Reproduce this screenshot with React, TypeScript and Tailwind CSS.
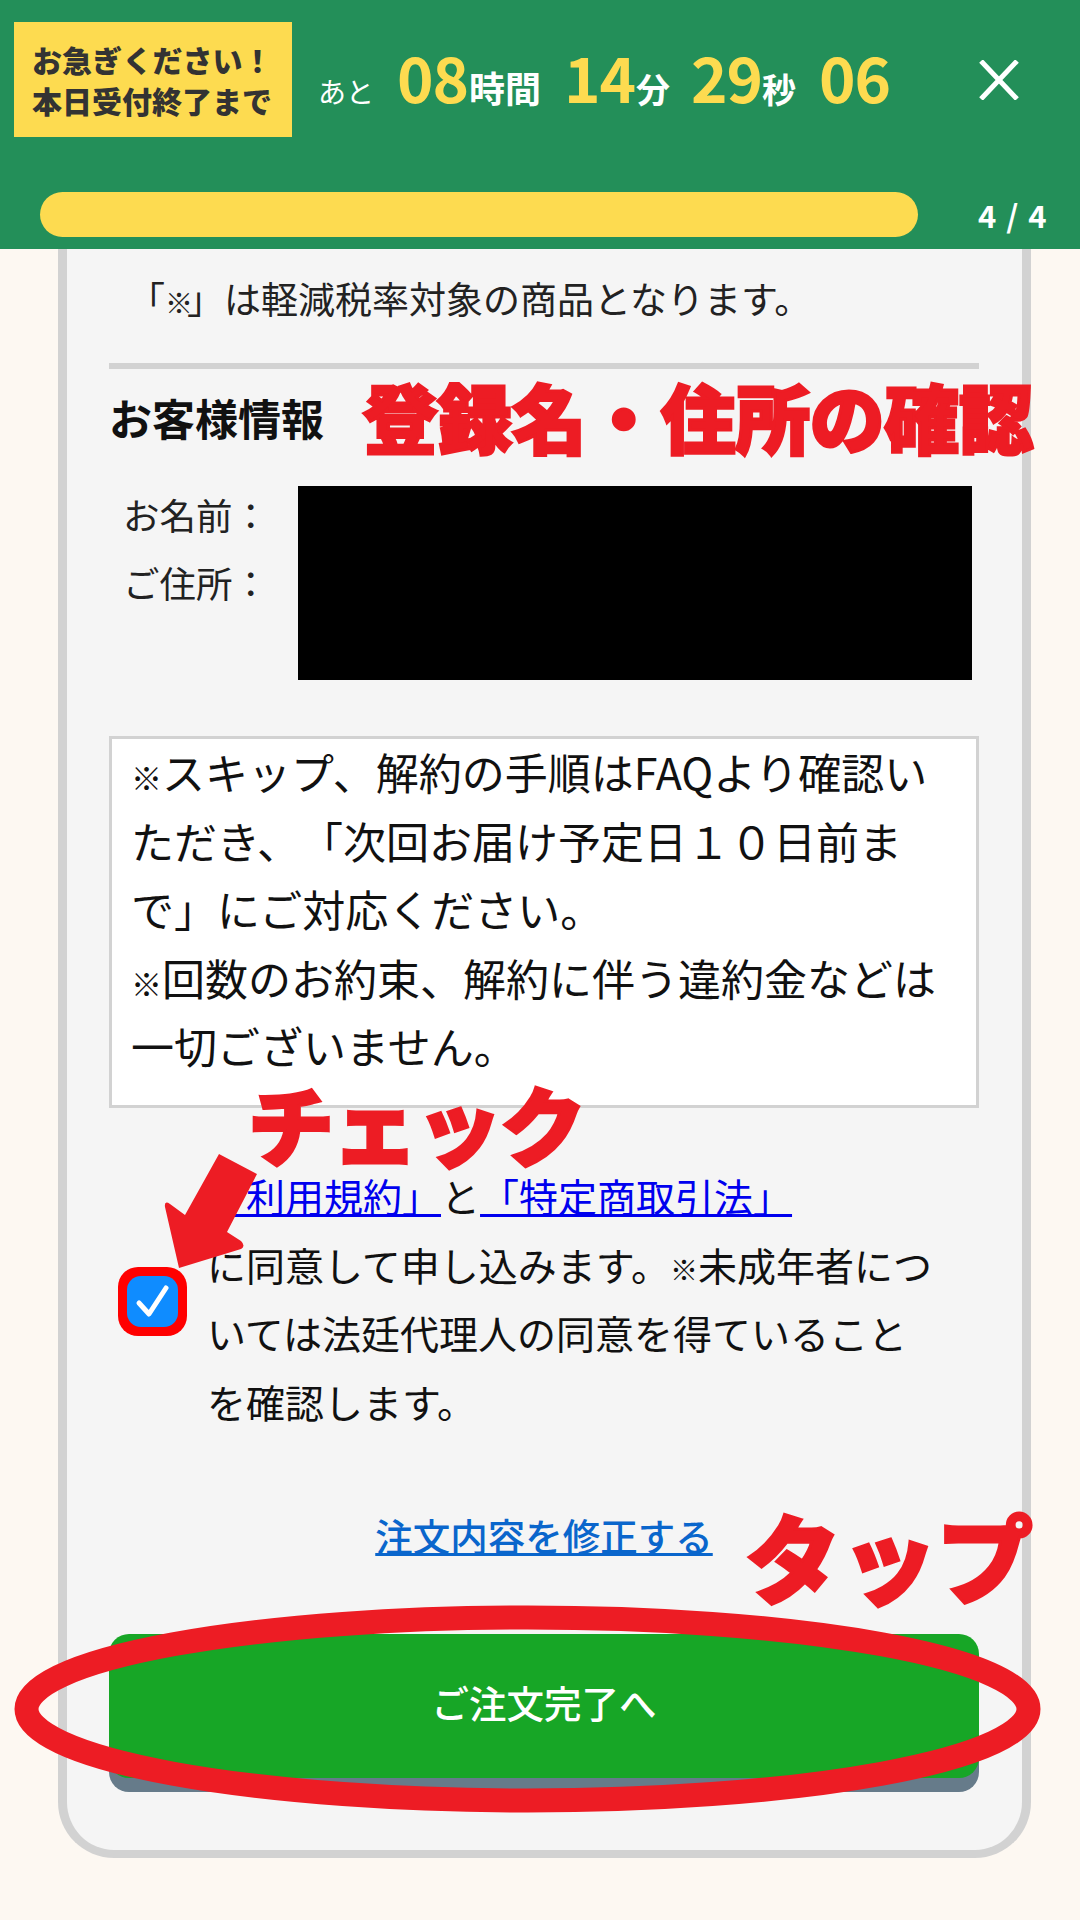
const jp = "font-['Noto_Sans_CJK_JP',sans-serif]";

// the ※ is much smaller and heavier than the kana around it in the reference
function Mark({ size }: { size: string }) {
  return <span className={`${size} leading-none font-bold`}>※</span>;
}

function CountdownBar() {
  return (
    <header className="h-[249px] bg-[#238f59] flex flex-col">
      <div className="flex items-start pt-[22px] pl-[14px] h-[192px]">
        <div className="w-[278px] h-[115px] bg-[#fddb50] flex flex-col justify-center pl-[18px] text-[#333333] text-[30px] leading-[41px] font-black">
          <span className="whitespace-nowrap">お急ぎください！</span>
          <span className="whitespace-nowrap">本日受付終了まで</span>
        </div>
        <div className="flex items-baseline mt-[19px] ml-[26px] text-white font-bold whitespace-nowrap">
          <span className="text-[28px] font-normal w-[79px]">あと</span>
          <span className="text-[62px] leading-[70px] tracking-[-1px] text-[#fddb50] w-[72px]">08</span>
          <span className="text-[36px] w-[95px]">時間</span>
          <span className="text-[62px] leading-[70px] tracking-[-1px] text-[#fddb50] w-[72px]">14</span>
          <span className="text-[34px] w-[55px]">分</span>
          <span className="text-[62px] leading-[70px] tracking-[-1px] text-[#fddb50] w-[71px]">29</span>
          <span className="text-[34px] w-[57px]">秒</span>
          <span className="text-[62px] leading-[70px] tracking-[-1px] text-[#fddb50]">06</span>
        </div>
        <svg className="absolute left-[979px] top-[60px]" width="40" height="40" viewBox="0 0 40 40">
          <path d="M2 1 L38 39 M38 1 L2 39" stroke="#ffffff" strokeWidth="5" fill="none" />
        </svg>
      </div>
      <div className="flex items-center pl-[40px]">
        <div className="w-[878px] h-[45px] rounded-full bg-[#fddb50]" />
        <span className="ml-[60px] text-[31px] leading-[45px] font-bold text-white whitespace-nowrap tracking-[1.5px]">4 / 4</span>
      </div>
    </header>
  );
}

function Annotations() {
  const red = "absolute font-black text-[#ed1c24] whitespace-nowrap [-webkit-text-stroke:3px_#ed1c24]";
  return (
    <>
      <div className={`${red} left-[363px] top-[366px] text-[74.5px] leading-[100px]`}>登録名・住所の確認</div>
      <div className={`${red} left-[248px] top-[1073px] text-[86px] leading-[100px] tracking-[-2px]`}>チェック</div>
      <div className={`${red} left-[745px] top-[1505px] text-[96px] leading-[100px]`}>タップ</div>
      <svg className="absolute left-0 top-0 pointer-events-none" width="1080" height="1920" viewBox="0 0 1080 1920">
        <path d="M179 1268 L165 1207 Q164 1200 170 1204 L185 1215 L219 1154 L257 1174 L227 1232 L241 1241 Q246 1246 241 1249 Z" fill="#ed1c24" />
        <ellipse cx="527.5" cy="1709" rx="501" ry="91.5" fill="none" stroke="#ed1c24" strokeWidth="24" />
      </svg>
    </>
  );
}

export default function App() {
  return (
    <div className={`relative w-[1080px] h-[1920px] overflow-hidden bg-[#fdf8f2] ${jp} [text-spacing-trim:space-all]`}>
      <CountdownBar />

      <main className="ml-[58px] w-[973px] border-x-[9px] border-b-[8px] border-[#d2d2d2] rounded-b-[56px] bg-[#f5f5f5] pl-[42px] pr-[43px] pb-[72px] text-[#222222]">
        <p className="pt-[24px] pl-[19px] text-[37px] leading-[50px] whitespace-nowrap">「<Mark size="text-[28px] tracking-[-6px]" />」は軽減税率対象の商品となります。</p>
        <div className="mt-[40px] h-[6px] bg-[#d2d2d2]" />

        <h2 className="mt-[23px] mb-[2px] text-[43px] leading-[50px] font-bold text-[#111111]">お客様情報</h2>

        <div className="mt-[44px] flex">
          <div className="w-[189px] pl-[14px] -mt-[5px] text-[36.5px] leading-[68px] whitespace-nowrap">
            <div>お名前：</div>
            <div>ご住所：</div>
          </div>
          <div className="w-[674px] h-[194px] bg-black" />
        </div>

        <div className="mt-[56px] h-[372px] border-[3px] border-[#d2d2d2] bg-white px-[19px] text-[43px] leading-[68.5px] text-[#111111] whitespace-nowrap overflow-hidden">
          <div className="-mt-[2px]">
            <Mark size="text-[31px]" />スキップ、解約の手順はFAQより確認い<br />
            ただき、「次回お届け予定日１０日前ま<br />
            で」にご対応ください。<br />
            <Mark size="text-[31px]" />回数のお約束、解約に伴う違約金などは<br />
            一切ございません。
          </div>
        </div>

        <div className="mt-[53px] flex items-center pl-[9px]">
          <div className="w-[69px] h-[69px] rounded-[20px] bg-[#ff0000] flex items-center justify-center shrink-0">
            <div className="w-[51px] h-[51px] rounded-[14px] bg-[#0f8cff] flex items-center justify-center">
              <svg width="36" height="36" viewBox="0 0 36 36">
                <path d="M4 20 L14 31 L31 5" stroke="#ffffff" strokeWidth="5" strokeLinecap="round" strokeLinejoin="round" fill="none" />
              </svg>
            </div>
          </div>
          <div className="ml-[20px] pb-[6px] text-[39px] leading-[68.5px] text-[#111111] whitespace-nowrap">
            <a href="#" className="text-[#0000ee] underline">「利用規約」</a>
            <span>と</span>
            <a href="#" className="text-[#0000ee] underline">「特定商取引法」</a>
            <br />
            に同意して申し込みます。<Mark size="text-[28px]" />未成年者につ<br />
            いては法廷代理人の同意を得ていること<br />
            を確認します。
          </div>
        </div>

        <div className="mt-[69px] text-center">
          <a href="#" className="text-[37.5px] leading-[50px] font-medium text-[#0a66cc] underline">注文内容を修正する</a>
        </div>

        <button className="mt-[74px] block w-[870px] h-[144px] rounded-[20px] bg-[#17a626] shadow-[0_14px_0_#667b8a] text-white text-[37.5px] font-medium pb-[8px]">
          ご注文完了へ
        </button>
      </main>

      <Annotations />
    </div>
  );
}
